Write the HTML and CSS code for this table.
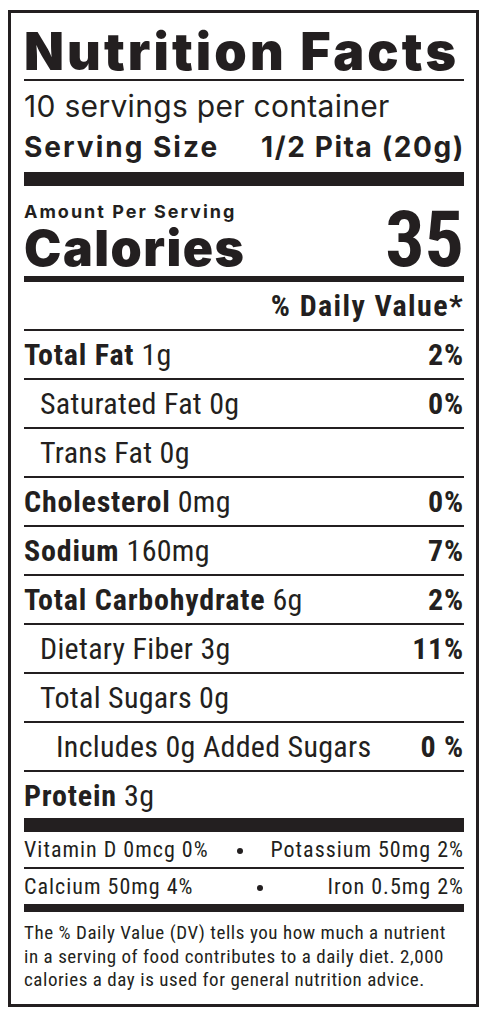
FILE: index.html
```html
<!DOCTYPE html>
<html lang="en">
<head>
    <meta charset="UTF-8">
    <meta name="viewport" content="width=device-width, initial-scale=1.0">
    <title>Nutrition Facts</title>
    <link rel="stylesheet" href="styles.css">
</head>
<body>
    <div class="label">
        <h1 class="title">Nutrition Facts</h1>
        <p class="servings">10 servings per container</p>
        <p class="serving-size"><span>Serving Size</span><span>1/2 Pita (20g)</span></p>
        <div class="bar bar-thick"></div>

        <div class="calories">
            <div>
                <p class="amount">Amount Per Serving</p>
                <p class="cal-label">Calories</p>
            </div>
            <div class="cal-value">35</div>
        </div>
        <div class="bar bar-medium"></div>

        <p class="dv-head">% Daily Value*</p>

        <!-- Nutrient rows -->
        <ul class="nutrients">
            <li class="row"><span><b>Total Fat</b> 1g</span><b>2%</b></li>
            <li class="row indent"><span>Saturated Fat 0g</span><b>0%</b></li>
            <li class="row indent"><span>Trans Fat 0g</span></li>
            <li class="row"><span><b>Cholesterol</b> 0mg</span><b>0%</b></li>
            <li class="row"><span><b>Sodium</b> 160mg</span><b>7%</b></li>
            <li class="row"><span><b>Total Carbohydrate</b> 6g</span><b>2%</b></li>
            <li class="row indent"><span>Dietary Fiber 3g</span><b>11%</b></li>
            <li class="row indent"><span>Total Sugars 0g</span></li>
            <li class="row indent-2"><span>Includes 0g Added Sugars</span><b>0 %</b></li>
            <li class="row last"><span><b>Protein</b> 3g</span></li>
        </ul>
        <div class="bar bar-thick"></div>

        <div class="micro">
            <span>Vitamin D 0mcg 0%</span><span class="dot"></span><span>Potassium 50mg 2%</span>
        </div>
        <div class="micro last">
            <span>Calcium 50mg 4%</span><span class="dot"></span><span>Iron 0.5mg 2%</span>
        </div>
        <div class="bar bar-small"></div>

        <p class="footnote">The % Daily Value (DV) tells you how much a nutrient<br>in a serving of food contributes to a daily diet. 2,000<br>calories a day is used for general nutrition advice.</p>
    </div>
</body>
</html>
```
FILE: styles.css
```css
body {
    margin: 0;
    background: #fff;
    color: #231f20;
}
p {
    margin: 0;
}
.label {
    box-sizing: border-box;
    width: 471px;
    height: 997px;
    margin: 10px 0 0 8px;
    padding: 12px 12px 0 13px;
    border: 3px solid #231f20;
}
.title {
    margin: 0;
    font-family: Inter, sans-serif;
    font-weight: 900;
    font-size: 52px;
    line-height: 54px;
    letter-spacing: 3.1px;
    white-space: nowrap;
    border-bottom: 2px solid #231f20;
}
.servings {
    margin-top: 7px;
    font-family: Inter, sans-serif;
    font-size: 30px;
    line-height: 36px;
    letter-spacing: 0.3px;
}
.serving-size {
    display: flex;
    justify-content: space-between;
    font-family: Inter, sans-serif;
    font-weight: 700;
    font-size: 28px;
    line-height: 46px;
    letter-spacing: 2px;
}
.serving-size span:last-child {
    letter-spacing: 1.6px;
    margin-right: -1px;
}
.bar {
    background: #231f20;
}
.bar-thick {
    height: 14px;
    margin-top: 2px;
}
.bar-medium {
    height: 6px;
    margin-top: 3px;
}
.bar-small {
    height: 8px;
}
.calories {
    display: flex;
    justify-content: space-between;
    align-items: last baseline;
    margin-top: 15px;
}
.amount {
    font-family: Inter, sans-serif;
    font-weight: 700;
    font-size: 18px;
    line-height: 22px;
    letter-spacing: 2px;
}
.cal-label {
    font-family: Inter, sans-serif;
    font-weight: 900;
    font-size: 50px;
    line-height: 50px;
    letter-spacing: 1.5px;
}
.cal-value {
    font-family: "Roboto Condensed", sans-serif;
    font-weight: 700;
    font-size: 78px;
    line-height: 60px;
}
.dv-head {
    margin-top: 7px;
    text-align: right;
    font-family: "Roboto Condensed", sans-serif;
    font-weight: 700;
    font-size: 30px;
    line-height: 34px;
    letter-spacing: 1.4px;
    padding-bottom: 6px;
    border-bottom: 2px solid #231f20;
}
.nutrients {
    list-style: none;
    margin: 0;
    padding: 0;
}
.row {
    display: flex;
    justify-content: space-between;
    height: 47px;
    font-family: "Roboto Condensed", sans-serif;
    font-size: 30px;
    line-height: 47px;
    letter-spacing: 0.3px;
    border-bottom: 2px solid #231f20;
}
.row b {
    font-weight: 700;
    letter-spacing: 0.8px;
}
.row.indent {
    padding-left: 16px;
}
.row.indent-2 {
    padding-left: 32px;
}
.row.last {
    height: 46px;
    border-bottom: none;
}
.nutrients + .bar-thick {
    margin-top: 0;
}
.micro {
    display: flex;
    justify-content: space-between;
    align-items: center;
    height: 35px;
    font-family: "Roboto Condensed", sans-serif;
    font-size: 22px;
    line-height: 35px;
    letter-spacing: 1px;
    border-bottom: 2px solid #231f20;
}
.micro .dot {
    width: 6px;
    height: 6px;
    margin-top: 2px;
    border-radius: 50%;
    background: #231f20;
}
.micro.last {
    border-bottom: none;
}
.footnote {
    padding-top: 9px;
    font-family: "Roboto Condensed", sans-serif;
    font-size: 19px;
    line-height: 23.5px;
    letter-spacing: 0.55px;
    white-space: nowrap;
}
```
